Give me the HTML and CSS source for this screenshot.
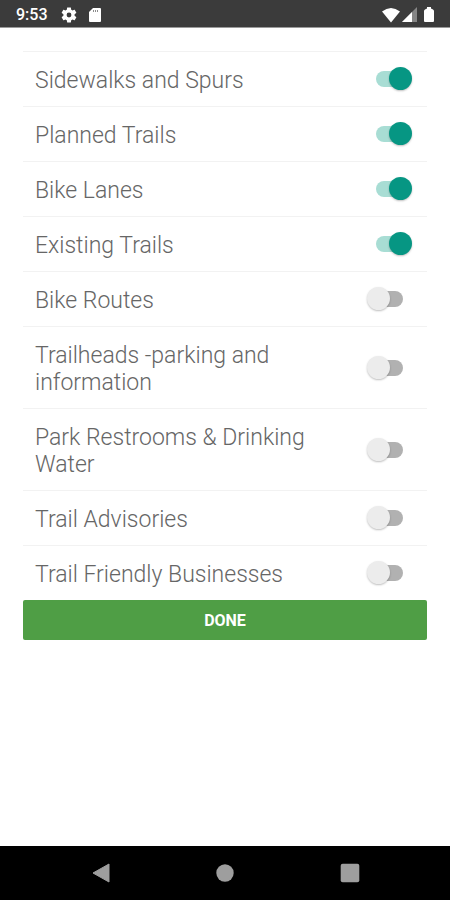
FILE: index.html
```html
<!DOCTYPE html>
<html lang="en">
<head>
<meta charset="utf-8">
<meta name="viewport" content="width=device-width, initial-scale=1">
<title>Map layers</title>
<link rel="stylesheet" href="styles.css">
</head>
<body>
<header class="status">
  <time class="clock">9:53</time>
  <svg class="gear" width="18" height="18" viewBox="0 0 24 24" aria-hidden="true"><path fill="#fff" fill-rule="evenodd" d="M19.4 13c.1-.3.1-.6.1-1s0-.7-.1-1l2.200-1.700c.2-.1.2-.4.1-.6l-2-3.500c-.1-.2-.4-.3-.6-.2l-2.500 1c-.5-.4-1.100-.7-1.700-1l-.4-2.600c0-.2-.2-.4-.5-.4h-4c-.2 0-.5.2-.5.4L9.100 5c-.6.300-1.200.6-1.700 1l-2.500-1c-.2-.1-.5 0-.6.2l-2 3.500c-.1.2-.1.5.1.600L4.600 11c-.1.300-.1.700-.1 1s0 .7.1 1l-2.200 1.700c-.2.1-.2.4-.1.600l2 3.500c.1.200.4.300.6.200l2.500-1c.5.400 1.100.7 1.700 1l.4 2.600c0 .2.300.4.500.4h4c.3 0 .5-.2.5-.4l.4-2.600c.6-.3 1.200-.6 1.700-1l2.500 1c.2.1.5 0 .6-.2l2-3.500c.1-.2.1-.5-.1-.6zM12 15.200a3.200 3.200 0 1 1 0-6.400 3.200 3.200 0 0 1 0 6.400z"/></svg>
  <svg class="card" width="14" height="16" viewBox="0 0 14 16" aria-hidden="true"><path fill="#fff" d="M5 1h7q1 0 1 1v12q0 1-1 1H2q-1 0-1-1V5z"/><path stroke="#8c8c8c" stroke-width="1" d="M5.500 3v2M7.500 3v2M9.500 3v2"/></svg>
  <span class="spacer"></span>
  <svg width="20" height="16" viewBox="0 0 20 16" aria-hidden="true"><path fill="#fff" d="M1 4.500Q10-2.500 19 4.500L10 15.500z"/></svg>
  <svg width="16" height="16" viewBox="0 0 16 16" aria-hidden="true"><path fill="#858585" d="M16 0v15H1z"/><path fill="#fff" d="M11 5v10H1z"/></svg>
  <svg class="battery" width="10" height="16" viewBox="0 0 10 16" aria-hidden="true"><path fill="#fff" d="M3 0h4v1.500l2 1q1 .5 1 1.500v10q0 1-1 1H1q-1 0-1-1V4q0-1 1-1.500l2-1z"/></svg>
</header>
<main class="content">
  <ul class="layers">
    <li class="row"><label for="sidewalks">Sidewalks and Spurs</label><input class="switch" type="checkbox" role="switch" id="sidewalks" checked></li>
    <li class="row"><label for="planned">Planned Trails</label><input class="switch" type="checkbox" role="switch" id="planned" checked></li>
    <li class="row"><label for="lanes">Bike Lanes</label><input class="switch" type="checkbox" role="switch" id="lanes" checked></li>
    <li class="row"><label for="existing">Existing Trails</label><input class="switch" type="checkbox" role="switch" id="existing" checked></li>
    <li class="row"><label for="routes">Bike Routes</label><input class="switch" type="checkbox" role="switch" id="routes"></li>
    <li class="row"><label for="trailheads">Trailheads -parking and information</label><input class="switch" type="checkbox" role="switch" id="trailheads"></li>
    <li class="row"><label for="restrooms">Park Restrooms &amp; Drinking Water</label><input class="switch" type="checkbox" role="switch" id="restrooms"></li>
    <li class="row"><label for="advisories">Trail Advisories</label><input class="switch" type="checkbox" role="switch" id="advisories"></li>
    <li class="row"><label for="businesses">Trail Friendly Businesses</label><input class="switch" type="checkbox" role="switch" id="businesses"></li>
  </ul>
  <button class="done" type="button">DONE</button>
</main>
<nav class="navbar">
  <button type="button" aria-label="Back"><svg width="20" height="20" viewBox="0 0 20 20"><path fill="#9e9e9e" stroke="#9e9e9e" stroke-linejoin="round" d="M2 10 18 1v18z"/></svg></button>
  <button type="button" aria-label="Home"><svg width="20" height="20" viewBox="0 0 20 20"><circle cx="10" cy="10" r="8.700" fill="#9e9e9e"/></svg></button>
  <button type="button" aria-label="Recent apps"><svg width="20" height="20" viewBox="0 0 20 20"><rect x=".7" y=".7" width="18.600" height="18.600" rx="2" fill="#9e9e9e"/></svg></button>
</nav>
</body>
</html>
```
FILE: styles.css
```css
* {
  box-sizing: border-box;
}

body {
  margin: 0;
  min-height: 100vh;
  display: flex;
  flex-direction: column;
  background: #fff;
  font-family: Roboto, "Liberation Sans", sans-serif;
}

.status {
  display: flex;
  align-items: center;
  height: 28px;
  padding: 2px 16px 0;
  background: #3b3b3b;
  border-bottom: 1px solid #9a9a9a;
}

.clock {
  color: #fff;
  font-size: 16px;
  font-weight: 500;
  line-height: 20px;
}

.gear {
  margin-left: 12px;
}

.card {
  margin-left: 10px;
}

.spacer {
  flex: 1;
}

.battery {
  margin-left: 7px;
}

.content {
  flex: 1;
  padding: 23px 23px 0;
}

.layers {
  list-style: none;
  margin: 0;
  padding: 0;
}

.row {
  display: flex;
  align-items: center;
  justify-content: space-between;
  gap: 48px;
  padding: 13px 15px 12px 12px;
  border-top: 1px solid #f2f2f2;
  color: #666;
  font-size: 23px;
  font-weight: 300;
  line-height: 27px;
}

.row label {
  padding-top: 2px;
}

.switch {
  appearance: none;
  position: relative;
  flex: none;
  width: 45px;
  height: 25px;
  margin: 0;
}

.switch::before {
  content: "";
  position: absolute;
  inset: 4px 9px 5px;
  border-radius: 8px;
  background: #b1b1b1;
}

.switch::after {
  content: "";
  position: absolute;
  top: 0;
  left: 0;
  width: 23px;
  height: 23px;
  border-radius: 50%;
  background: #ececec;
  box-shadow: 0 1px 2px rgba(0, 0, 0, 0.25);
}

.switch:checked::before {
  background: #a8ddd4;
}

.switch:checked::after {
  left: auto;
  right: 0;
  background: #069683;
}

.done {
  display: block;
  width: 100%;
  height: 40px;
  padding: 1px 0 0;
  border: 0;
  border-radius: 2px;
  background: #4f9e45;
  color: #fff;
  font: 700 16px/24px Roboto, "Liberation Sans", sans-serif;
}

.navbar {
  display: flex;
  align-items: center;
  justify-content: space-evenly;
  height: 54px;
  background: #000;
}

.navbar button {
  display: flex;
  justify-content: center;
  width: 48px;
  padding: 8px 0;
  border: 0;
  background: none;
}
```
